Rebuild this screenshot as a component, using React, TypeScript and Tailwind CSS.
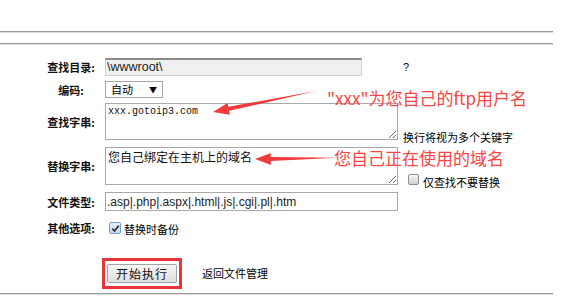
import React from "react";

const cjk = "font-['Noto_Sans_CJK_SC',sans-serif]";
const latin = "font-['Liberation_Sans','Noto_Sans_CJK_SC',sans-serif]";

function Rule() {
  return <div className="h-[2px] w-[553px] border-y border-t-[#9a9a9a] border-b-[#dcdcdc]" />;
}

function Label({ children }: { children: React.ReactNode }) {
  return (
    <div className={`ml-[41px] mr-[4px] w-[60px] shrink-0 text-center text-[11px] font-bold leading-[14px] text-[#111] ${cjk}`}>
      {children}
    </div>
  );
}

function Box({ checked }: { checked?: boolean }) {
  if (checked) {
    return (
      <span className="flex h-[12px] w-[12px] items-center justify-center rounded-[2px] border border-[#6f9fd8] bg-gradient-to-b from-[#e6f0fb] to-[#c4daf3]">
        <svg width="9" height="9" viewBox="0 0 9 9" aria-hidden>
          <path d="M1.2 4.6 L3.5 7 L7.8 1.6" fill="none" stroke="#333" strokeWidth="1.8" />
        </svg>
      </span>
    );
  }
  return <span className="h-[11px] w-[11px] rounded-[2px] border border-[#8e8e8e] bg-gradient-to-b from-[#f6f6f6] to-[#cfcfcf]" />;
}

export default function App() {
  return (
    <div className="relative h-[297px] w-[573px] overflow-hidden bg-white text-black">
      <div className="pt-[31px]">
        <Rule />
        <div className="mt-[10px]">
          <Rule />
        </div>

        {/* 查找目录 */}
        <div className="mt-[13px] flex items-center">
          <Label>查找目录:</Label>
          <input
            readOnly
            value="\wwwroot\"
            className={`h-[18px] w-[257px] border-x border-b border-t-2 border-x-[#d2d2d2] border-b-[#d2d2d2] border-t-[#8a8a8a] bg-[#f0f0f0] px-[1px] text-[12.5px] text-[#222] outline-none ${latin}`}
          />
          <span className={`ml-[41px] text-[11px] ${latin}`}>?</span>
        </div>

        {/* 编码 */}
        <div className="mt-[5px] flex items-center">
          <Label>编码:</Label>
          <div className={`flex h-[17px] w-[58px] items-center justify-between border border-[#a6a6a6] bg-white pl-[5px] pr-[5px] text-[11px] ${cjk}`}>
            <span>自动</span>
            <span className="text-[8px]">▼</span>
          </div>
        </div>

        {/* 查找字串 */}
        <div className="mt-[5px] flex items-center">
          <Label>查找字串:</Label>
          <div className="flex items-end">
            <textarea
              readOnly
              defaultValue="xxx.gotoip3.com"
              className="block h-[37px] w-[293px] border border-[#a9a9a9] px-[2px] py-[1px] font-['Liberation_Mono',monospace] text-[10px] leading-[14px] text-[#111] outline-none"
            />
            <span className={`mb-[-3px] ml-[5px] text-[11px] leading-[12px] ${cjk}`}>换行将视为多个关键字</span>
          </div>
        </div>

        {/* 替换字串 */}
        <div className="mt-[7px] flex items-center">
          <Label>替换字串:</Label>
          <div className="flex items-end">
            <textarea
              readOnly
              defaultValue="您自己绑定在主机上的域名"
              className={`block h-[38px] w-[293px] border border-[#a9a9a9] px-[2px] py-[1px] text-[12px] leading-[16px] text-[#111] outline-none ${cjk}`}
            />
            <label className={`mb-[-3px] ml-[10px] flex items-center gap-[4px] text-[11px] leading-[12px] ${cjk}`}>
              <Box />
              <span className="mt-[5px]">仅查找不要替换</span>
            </label>
          </div>
        </div>

        {/* 文件类型 */}
        <div className="mt-[7px] flex items-center">
          <Label>文件类型:</Label>
          <input
            readOnly
            value=".asp|.php|.aspx|.html|.js|.cgi|.pl|.htm"
            className={`h-[19px] w-[293px] border border-[#a9a9a9] bg-white px-[1px] text-[12px] text-[#222] outline-none ${latin}`}
          />
        </div>

        {/* 其他选项 */}
        <div className="mt-[8px] flex items-center">
          <Label>其他选项:</Label>
          <label className={`ml-[4px] flex items-center gap-[3px] text-[11px] ${cjk}`}>
            <Box checked />
            <span className="mt-[2px]">替换时备份</span>
          </label>
        </div>

        {/* 按钮 */}
        <div className="mt-[20px] flex items-center pl-[102px]">
          <div className="flex h-[31px] w-[80px] items-center justify-center border-[3px] border-[#e8333b]">
            <button className={`h-[19px] w-[70px] rounded-[2px] border border-[#a3a3a3] bg-gradient-to-b from-[#f7f7f7] to-[#dedede] text-[12px] leading-[17px] tracking-[1px] text-[#111] ${cjk}`}>
              开始执行
            </button>
          </div>
          <span className={`ml-[20px] text-[11px] ${cjk}`}>返回文件管理</span>
        </div>

        <div className="mt-[4px]">
          <Rule />
        </div>
      </div>

      {/* annotations */}
      <svg className="pointer-events-none absolute left-0 top-0" width="573" height="297" aria-hidden>
        <polygon points="213,112 227.5,102.9 228.3,106.8 316,91 229.1,110.8 229.9,114.7" fill="#f23a3a" />
        <polygon points="255,159 271,153 270.5,157 338,157.8 270.5,161 271,165" fill="#f23a3a" />
      </svg>
      <div className={`pointer-events-none absolute left-[327px] top-[87px] whitespace-nowrap text-[17px] leading-[22px] text-[#f74646] ${cjk}`}>
        "xxx"为您自己的ftp用户名
      </div>
      <div className={`pointer-events-none absolute left-[334px] top-[147px] whitespace-nowrap text-[17px] leading-[22px] text-[#f74646] ${cjk}`}>
        您自己正在使用的域名
      </div>
    </div>
  );
}
